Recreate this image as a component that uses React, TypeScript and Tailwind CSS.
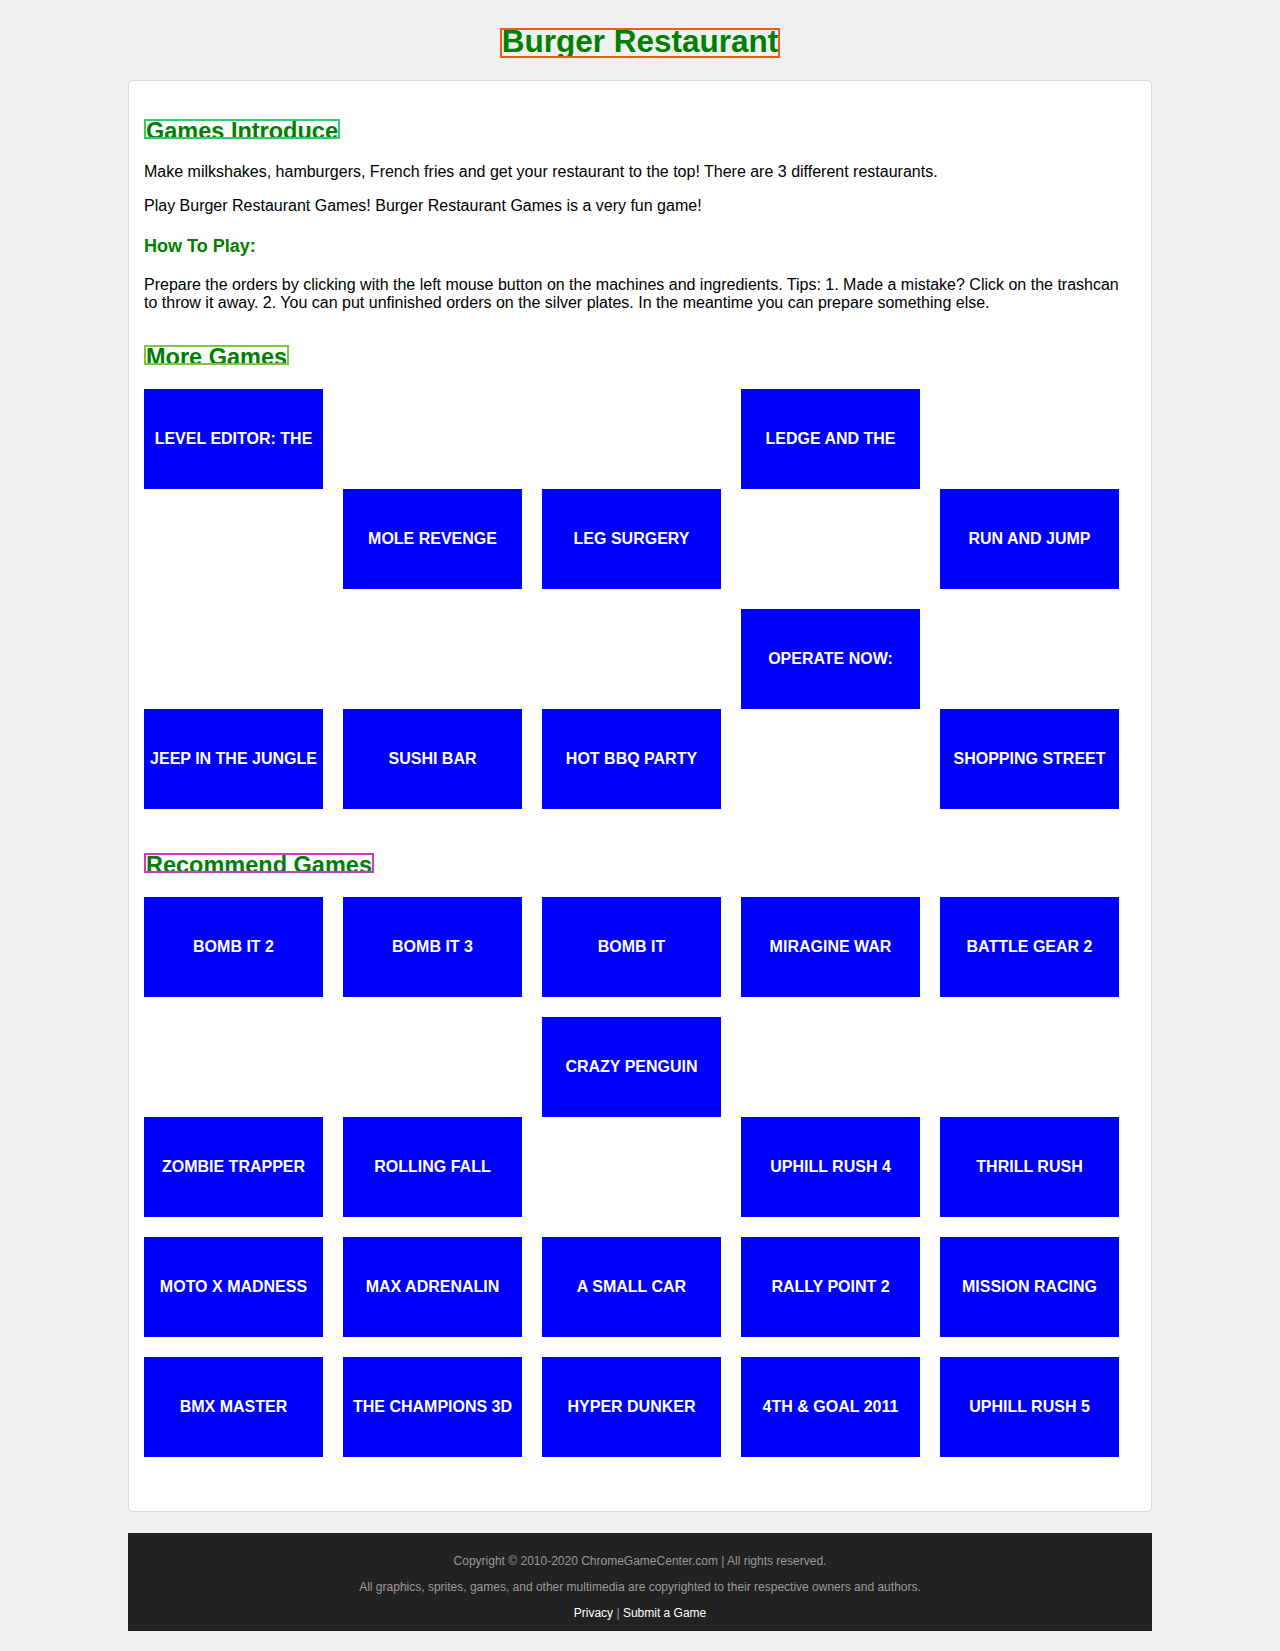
import React from 'react';

const moreGames = [
  'LEVEL EDITOR: THE GAME',
  'MOLE REVENGE',
  'LEG SURGERY',
  'LEDGE AND THE TREASURE',
  'RUN AND JUMP',
  'JEEP IN THE JUNGLE',
  'SUSHI BAR',
  'HOT BBQ PARTY',
  'OPERATE NOW: TONSIL SURGERY',
  'SHOPPING STREET',
];

const recommendGames = [
  'BOMB IT 2',
  'BOMB IT 3',
  'BOMB IT',
  'MIRAGINE WAR',
  'BATTLE GEAR 2',
  'ZOMBIE TRAPPER',
  'ROLLING FALL',
  'CRAZY PENGUIN CATAPULT',
  'UPHILL RUSH 4',
  'THRILL RUSH',
  'MOTO X MADNESS',
  'MAX ADRENALIN',
  'A SMALL CAR',
  'RALLY POINT 2',
  'MISSION RACING',
  'BMX MASTER',
  'THE CHAMPIONS 3D',
  'HYPER DUNKER',
  '4TH & GOAL 2011',
  'UPHILL RUSH 5',
];

function SectionTitle({ children, border, className = '' }: { children: React.ReactNode; border: string; className?: string }) {
  return (
    <h2
      className={`w-fit h-[20px] border-2 ${border} overflow-hidden text-[23.5px] leading-[20px] font-bold text-[#008000] ${className}`}
    >
      {children}
    </h2>
  );
}

// tiles are inline-blocks: long names wrap to a second (white on white) line,
// which shifts the tile up by one line, like the original page
function GameGrid({ games }: { games: string[] }) {
  return (
    <div className="-mr-5 leading-normal text-[16px]">
      {games.map((name) => (
        <a
          key={name}
          href="#"
          className="inline-block align-baseline w-[179px] h-[100px] mr-5 mb-5 bg-[#0000ff] text-white text-center font-bold text-[16px] leading-[100px]"
        >
          {name}
        </a>
      ))}
    </div>
  );
}

export default function App() {
  return (
    <div className="min-h-screen bg-[#f0f0f0] pt-7 pb-5 font-['Liberation_Sans',Arial,sans-serif] text-black">
      {/* Page title */}
      <h1 className="mx-auto w-fit h-[30px] border-2 border-[#f05a1a] overflow-hidden text-[31.5px] leading-[23px] font-bold text-[#008000]">
        Burger Restaurant
      </h1>

      {/* Main card */}
      <div className="mx-auto mt-[22px] w-[1024px] bg-white border border-[#dddddd] rounded-[4px] px-[15px] pt-[38px] pb-[34px]">
        <SectionTitle border="border-[#2ecc71]">Games Introduce</SectionTitle>
        <p className="mt-[24px] text-[16px] leading-[18px]">
          Make milkshakes, hamburgers, French fries and get your restaurant to the top! There are 3 different restaurants.
        </p>
        <p className="mt-[16px] text-[16px] leading-[18px]">
          Play Burger Restaurant Games! Burger Restaurant Games is a very fun game!
        </p>
        <h3 className="mt-[21px] text-[18px] leading-[21px] font-bold text-[#008000]">How To Play:</h3>
        <p className="mt-[19px] text-[16px] leading-[18px]">
          Prepare the orders by clicking with the left mouse button on the machines and ingredients. Tips: 1. Made a
          mistake? Click on the trashcan to throw it away. 2. You can put unfinished orders on the silver plates. In the
          meantime you can prepare something else.
        </p>

        <SectionTitle border="border-[#7cc644]" className="mt-[33px]">
          More Games
        </SectionTitle>
        <div className="mt-[24px]">
          <GameGrid games={moreGames} />
        </div>

        <SectionTitle border="border-[#c93cc3]" className="mt-[24px]">
          Recommend Games
        </SectionTitle>
        <div className="mt-[24px]">
          <GameGrid games={recommendGames} />
        </div>
      </div>

      {/* Footer */}
      <footer className="mx-auto mt-[21px] w-[1024px] bg-[#222222] pt-5 pb-[10px] text-center text-[12px] leading-[16px] text-[#999999]">
        <p>Copyright © 2010-2020 ChromeGameCenter.com | All rights reserved.</p>
        <p className="mt-[10px]">
          All graphics, sprites, games, and other multimedia are copyrighted to their respective owners and authors.
        </p>
        <p className="mt-[10px]">
          <a href="#" className="text-white">
            Privacy
          </a>{' '}
          |{' '}
          <a href="#" className="text-white">
            Submit a Game
          </a>
        </p>
      </footer>
    </div>
  );
}
